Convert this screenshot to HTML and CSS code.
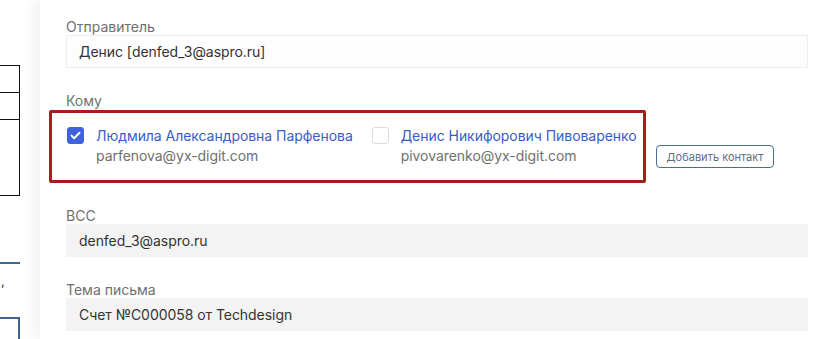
FILE: index.html
```html
<!DOCTYPE html>
<html lang="ru">
<head>
  <meta charset="UTF-8" />
  <title>Новое письмо</title>
  <link rel="stylesheet" href="styles.css">
</head>
<body>
  <div class="page">

    <aside class="side">
      <div class="side-table">
        <div class="side-row"></div>
        <div class="side-row"></div>
        <div class="side-row tall"></div>
      </div>
      <div class="side-line"></div>
      <div class="side-quote">,</div>
      <div class="side-box"></div>
    </aside>

    <main class="panel">
      <div class="field">
        <div class="label">Отправитель</div>
        <div class="input bordered">Денис [denfed_3@aspro.ru]</div>
      </div>

      <div class="field">
        <div class="label">Кому</div>
        <div class="to-row">
          <div class="recipients">
            <label class="contact">
              <span class="check checked">
                <svg width="11" height="9" viewBox="0 0 11 9"><path d="M1.5 4.6 4.2 7.2 9.5 1.8" fill="none" stroke="#fff" stroke-width="2" stroke-linecap="round" stroke-linejoin="round"/></svg>
              </span>
              <span class="contact-text">
                <span class="contact-name">Людмила Александровна Парфенова</span>
                <span class="contact-mail">parfenova@yx-digit.com</span>
              </span>
            </label>
            <label class="contact">
              <span class="check"></span>
              <span class="contact-text">
                <span class="contact-name">Денис Никифорович Пивоваренко</span>
                <span class="contact-mail">pivovarenko@yx-digit.com</span>
              </span>
            </label>
          </div>
          <button class="add-btn">Добавить контакт</button>
        </div>
      </div>

      <div class="field">
        <div class="label">BCC</div>
        <div class="input filled">denfed_3@aspro.ru</div>
      </div>

      <div class="field">
        <div class="label">Тема письма</div>
        <div class="input filled">Счет №С000058 от Techdesign</div>
      </div>
    </main>

  </div>
</body>
</html>
```

FILE: styles.css
```css
:root {
  --label: #707070;
  --text: #333;
  --link: #3a5bc7;
  --check: #3e63dd;
  --accent: #4a6e96;
  --mark: #ad1a1e;
  --field-bg: #f3f3f3;
}

body {
  margin: 0;
  font-family: 'Inter', 'Noto Sans', sans-serif;
  background: #fff;
  color: var(--text);
  overflow: hidden;
}

.page {
  display: flex;
  height: 339px;
}

/* Left strip with cut-off content */
.side {
  width: 40px;
  flex-shrink: 0;
}

.side-table {
  width: 19px;
  margin-top: 65px;
  border: 1px solid #111;
  border-left: none;
}

.side-row {
  height: 26px;
  border-bottom: 1px solid #111;
}

.side-row.tall {
  height: 75px;
  border-bottom: none;
}

.side-line {
  width: 20px;
  height: 2px;
  margin-top: 66px;
  background: #3f6494;
}

.side-quote {
  font-size: 13px;
  line-height: 14px;
  margin-top: 10px;
  padding-left: 1px;
  color: #333;
}

.side-box {
  width: 18px;
  height: 30px;
  margin-top: 29px;
  border: 2px solid #3f6494;
  border-left: none;
}

/* Main form panel */
.panel {
  flex: 1;
  background: #fff;
  padding: 18px 11px 0 26px;
  box-shadow: -6px 0 16px rgba(0,0,0,0.06);
}

.field {
  margin-bottom: 24px;
}

.label {
  font-size: 14px;
  line-height: 17px;
  color: var(--label);
}

.input {
  height: 33px;
  box-sizing: border-box;
  padding: 0 12px;
  font-size: 14px;
  line-height: 32px;
  letter-spacing: -0.05px;
  color: var(--text);
  border: 1px solid transparent;
}

.input.bordered {
  background: #fdfdfd;
  border-color: #eee;
}

.input.filled {
  background: var(--field-bg);
  border-color: var(--field-bg);
}

/* Recipients */
.to-row {
  display: flex;
  align-items: flex-end;
  margin-top: 1px;
}

.recipients {
  display: flex;
  gap: 19px;
  margin-left: -17px;
  padding: 13px 6px 14px 15px;
  border: 3px solid var(--mark);
  border-radius: 2px;
}

.contact {
  display: flex;
  align-items: flex-start;
  gap: 12px;
  cursor: pointer;
}

.check {
  width: 17px;
  height: 17px;
  box-sizing: border-box;
  margin-top: 1px;
  border: 1px solid #dcdcdc;
  border-radius: 3px;
  background: #fff;
  display: flex;
  align-items: center;
  justify-content: center;
}

.check.checked {
  background: var(--check);
  border-color: var(--check);
}

.contact-text {
  display: flex;
  flex-direction: column;
  font-size: 14px;
  line-height: 20px;
  letter-spacing: -0.05px;
}

.contact-name {
  color: var(--link);
}

.contact-mail {
  color: var(--label);
}

.add-btn {
  margin: 0 0 15px 10px;
  height: 23px;
  padding: 0 10px;
  font-family: inherit;
  font-size: 11px;
  color: #5b6f86;
  background: #fff;
  border: 1px solid var(--accent);
  border-radius: 4px;
  cursor: pointer;
}
```
